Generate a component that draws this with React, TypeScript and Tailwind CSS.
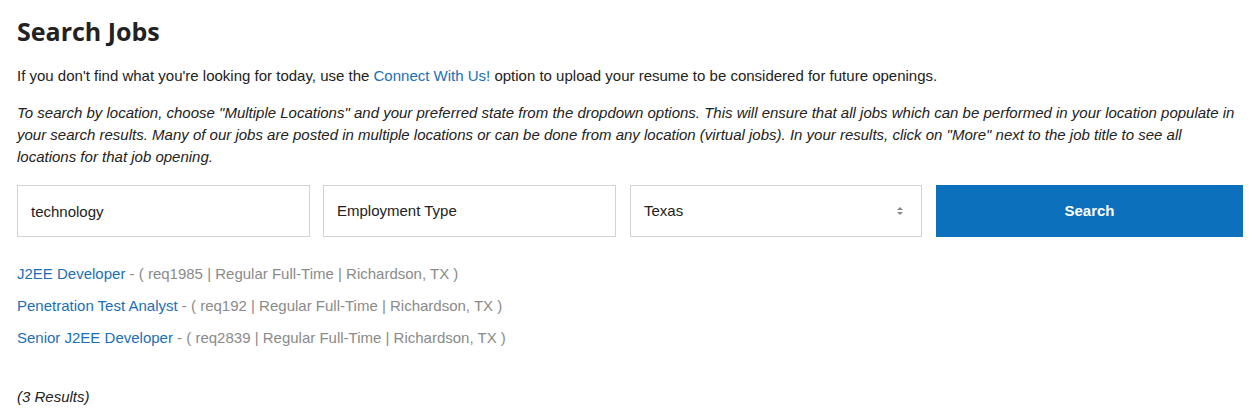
import { useState } from "react";

const jobs = [
	{ title: "J2EE Developer", req: "req1985" },
	{ title: "Penetration Test Analyst", req: "req192" },
	{ title: "Senior J2EE Developer", req: "req2839" },
];

export default function App() {
	const [keyword, setKeyword] = useState("technology");

	return (
		<div className="min-h-screen bg-white pr-[16px] pl-[17px] font-['Liberation_Sans',Arial,sans-serif] text-[#222] text-[15px]">
			<h1 className="pt-[15px] font-['Open_Sans',sans-serif] font-bold text-[25px] leading-[32px] text-[#222]">
				Search Jobs
			</h1>

			<p className="mt-[18px] leading-[22px]">
				If you don't find what you're looking for today, use the{" "}
				<a className="text-[#1a6fb9]" href="#connect">
					Connect With Us!
				</a>{" "}
				option to upload your resume to be considered for future openings.
			</p>

			<p className="mt-[15px] italic leading-[22px]">
				To search by location, choose "Multiple Locations" and your preferred
				state from the dropdown options. This will ensure that all jobs which
				can be performed in your location populate in your search results. Many
				of our jobs are posted in multiple locations or can be done from any
				location (virtual jobs). In your results, click on "More" next to the
				job title to see all locations for that job opening.
			</p>

			<div className="mt-[17px] grid grid-cols-[293px_293px_293px_1fr] gap-[13px]">
				<input
					className="h-[52px] border border-[#d3d3d3] px-[13px] text-[#222] outline-none"
					onChange={(e) => setKeyword(e.target.value)}
					type="text"
					value={keyword}
				/>
				<div className="flex h-[52px] items-center border border-[#d3d3d3] px-[13px]">
					Employment Type
				</div>
				<div className="ml-px flex h-[52px] items-center justify-between border border-[#d3d3d3] pr-[18px] pl-[13px]">
					<span>Texas</span>
					<svg
						aria-hidden="true"
						className="h-[8px] w-[6px] text-[#888]"
						fill="currentColor"
						viewBox="0 0 6 8"
					>
						<path d="M3 0 6 3H0z" />
						<path d="M3 8 6 5H0z" />
					</svg>
				</div>
				<button
					className="ml-px h-[52px] bg-[#0c70bc] font-bold text-[15px] text-white"
					type="button"
				>
					Search
				</button>
			</div>

			<div className="mt-[26px] space-y-[10px]">
				{jobs.map((job) => (
					<div className="leading-[22px]" key={job.req}>
						<a className="text-[#1a6fb9]" href="#job">
							{job.title}
						</a>
						<span className="text-[#8a8a8a]">
							{" "}
							- ( {job.req} | Regular Full-Time | Richardson, TX )
						</span>
					</div>
				))}
			</div>

			<p className="mt-[37px] italic leading-[22px]">(3 Results)</p>
		</div>
	);
}
